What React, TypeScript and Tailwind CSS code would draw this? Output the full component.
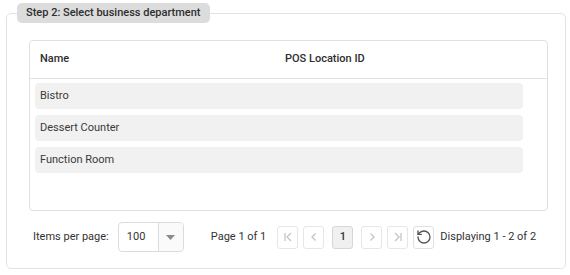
import React from "react";
import { RotateCcw } from "lucide-react";

const departments = [
  { name: "Bistro", posId: "" },
  { name: "Dessert Counter", posId: "" },
  { name: "Function Room", posId: "" },
];

function PagerButton({
  children,
  active,
  className = "",
}: {
  children: React.ReactNode;
  active?: boolean;
  className?: string;
}) {
  return (
    <button
      className={`flex h-[23px] w-[21px] shrink-0 items-center justify-center rounded-[3px] border ${
        active
          ? "border-[#d6d6d6] bg-[#f0f0f0] text-[#333]"
          : "border-[#e6e6e6] bg-white text-[#c4c4c4]"
      } ${className}`}
    >
      {children}
    </button>
  );
}

function FirstIcon() {
  return (
    <svg width="12" height="12" viewBox="0 0 12 12" fill="none" stroke="currentColor" strokeWidth="1.3">
      <path d="M3 2v8M9 2L5 6l4 4" />
    </svg>
  );
}

function PrevIcon() {
  return (
    <svg width="12" height="12" viewBox="0 0 12 12" fill="none" stroke="currentColor" strokeWidth="1.3">
      <path d="M7.5 2.5L4 6l3.5 3.5" />
    </svg>
  );
}

function NextIcon() {
  return (
    <svg width="12" height="12" viewBox="0 0 12 12" fill="none" stroke="currentColor" strokeWidth="1.3">
      <path d="M4.5 2.5L8 6l-3.5 3.5" />
    </svg>
  );
}

function LastIcon() {
  return (
    <svg width="12" height="12" viewBox="0 0 12 12" fill="none" stroke="currentColor" strokeWidth="1.3">
      <path d="M9 2v8M3 2l4 4-4 4" />
    </svg>
  );
}

export default function App() {
  return (
    <div className="h-[275px] w-[570px] bg-white pt-[3px] font-['Roboto',sans-serif] text-[11px] text-[#333]">
      <fieldset className="mr-[4px] ml-[6px] rounded-[5px] border border-[#e3e3e3] pb-[16px] pl-[22px] pr-[17px]">
        <legend className="-ml-[12px] rounded-[5px] bg-[#dcdcdc] px-[9px] py-[3px] text-[11px] font-medium leading-[14px] text-[#2e2e2e]">
          Step 2: Select business department
        </legend>

        {/* Table card */}
        <div className="mt-[17px] h-[171px] rounded-[4px] border border-[#e0e0e0]">
          <div className="flex h-[38px] items-center border-b border-[#e3e3e3] pl-[10px] font-medium text-[#2e2e2e]">
            <span className="w-[245px]">Name</span>
            <span>POS Location ID</span>
          </div>
          <div className="mt-[4px] mr-[24px] ml-[5px] flex flex-col gap-[6px]">
            {departments.map((d) => (
              <div
                key={d.name}
                className="flex h-[26px] items-center rounded-[4px] bg-[#f1f1f1] pl-[5px] text-[#3a3a3a]"
              >
                <span className="w-[245px]">{d.name}</span>
                <span>{d.posId}</span>
              </div>
            ))}
          </div>
        </div>

        {/* Footer */}
        <div className="mt-[11px] flex h-[30px] items-center whitespace-nowrap pl-[4px]">
          <span>Items per page:</span>
          <div className="ml-[9px] flex h-[30px] w-[66px] shrink-0 overflow-hidden rounded-[4px] border border-[#dcdcdc]">
            <span className="flex w-[39px] items-center pl-[8px] text-[#333]">100</span>
            <span className="flex flex-1 items-center justify-center border-l border-[#dcdcdc] bg-[#fafafa]">
              <svg width="9" height="5" viewBox="0 0 9 5">
                <path d="M0 0h9L4.5 5z" fill="#8a8a8a" />
              </svg>
            </span>
          </div>
          <span className="ml-[27px]">Page 1 of 1</span>
          <div className="ml-[11px] flex items-center gap-[5px]">
            <PagerButton>
              <FirstIcon />
            </PagerButton>
            <PagerButton>
              <PrevIcon />
            </PagerButton>
            <PagerButton active className="mx-[3px] text-[11px] font-medium">
              1
            </PagerButton>
            <PagerButton>
              <NextIcon />
            </PagerButton>
            <PagerButton>
              <LastIcon />
            </PagerButton>
            <button className="flex h-[23px] w-[21px] shrink-0 items-center justify-center rounded-[3px] border border-[#e0e0e0] bg-white text-[#555]">
              <RotateCcw size={16} strokeWidth={2} />
            </button>
          </div>
          <span className="ml-[6px]">Displaying 1 - 2 of 2</span>
        </div>
      </fieldset>
    </div>
  );
}
